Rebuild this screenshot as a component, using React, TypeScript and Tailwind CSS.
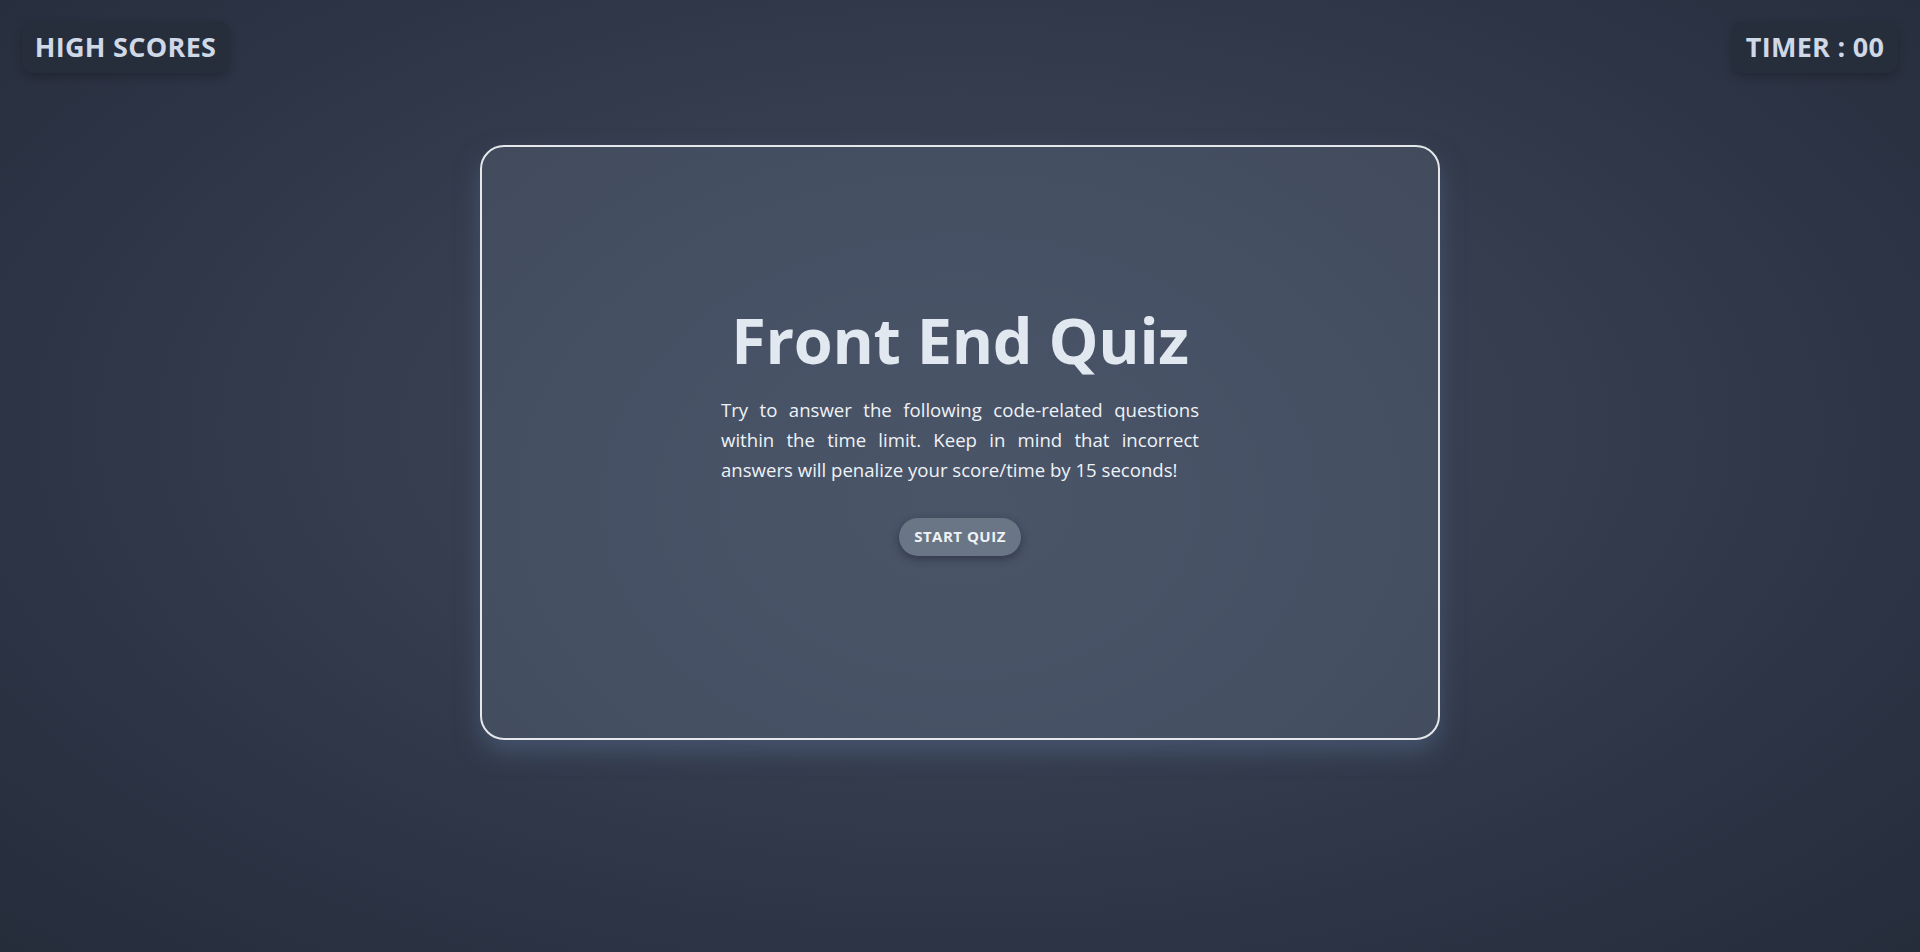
import React from "react";

export default function App() {
  return (
    <div
      className="min-h-[952px] w-full bg-[radial-gradient(ellipse_at_50%_45%,#3d4556_0%,#363e4f_40%,#2d3445_70%,#252c3a_100%)] text-[#e2e8f0]"
      style={{ fontFamily: '"Open Sans", "Noto Sans", sans-serif' }}
    >
      <header className="flex justify-between px-[22px] pt-[21px]">
        <button className="h-[52px] w-[207px] rounded-[10px] bg-[#262d3b] text-[27px] font-bold tracking-[0.3px] text-[#cfd8e6] shadow-[0_4px_10px_rgba(0,0,0,0.22)]">
          HIGH SCORES
        </button>
        <div className="flex h-[52px] w-[166px] items-center justify-center rounded-[10px] bg-[#262d3b] text-[27px] font-bold tracking-[0.3px] text-[#cfd8e6] shadow-[0_4px_10px_rgba(0,0,0,0.22)]">
          TIMER : 00
        </div>
      </header>
      <main className="flex justify-center pt-[72px]">
        <section className="flex h-[595px] w-[960px] flex-col items-center justify-center rounded-[24px] border-2 border-[#e5e7eb] bg-[radial-gradient(ellipse_at_50%_60%,#4b5568_0%,#465165_50%,#414b5c_100%)] pb-[22px] shadow-[0_12px_24px_rgba(80,98,128,0.6)]">
          <h1 className="text-[63px] font-bold leading-none tracking-[-0.3px] text-[#e2e8f0]">
            Front End Quiz
          </h1>
          <p className="mt-[24px] w-[478px] text-justify text-[18.6px] leading-[30px] text-[#eef2f7]">
            Try to answer the following code-related questions within the time
            limit. Keep in mind that incorrect answers will penalize your
            score/time by 15 seconds!
          </p>
          <button className="mt-[33px] h-[38px] w-[122px] rounded-full bg-[#6a7586] text-[15px] font-bold tracking-[0.5px] text-[#eef2f7] shadow-[0_3px_8px_rgba(20,25,35,0.45)]">
            START QUIZ
          </button>
        </section>
      </main>
    </div>
  );
}
